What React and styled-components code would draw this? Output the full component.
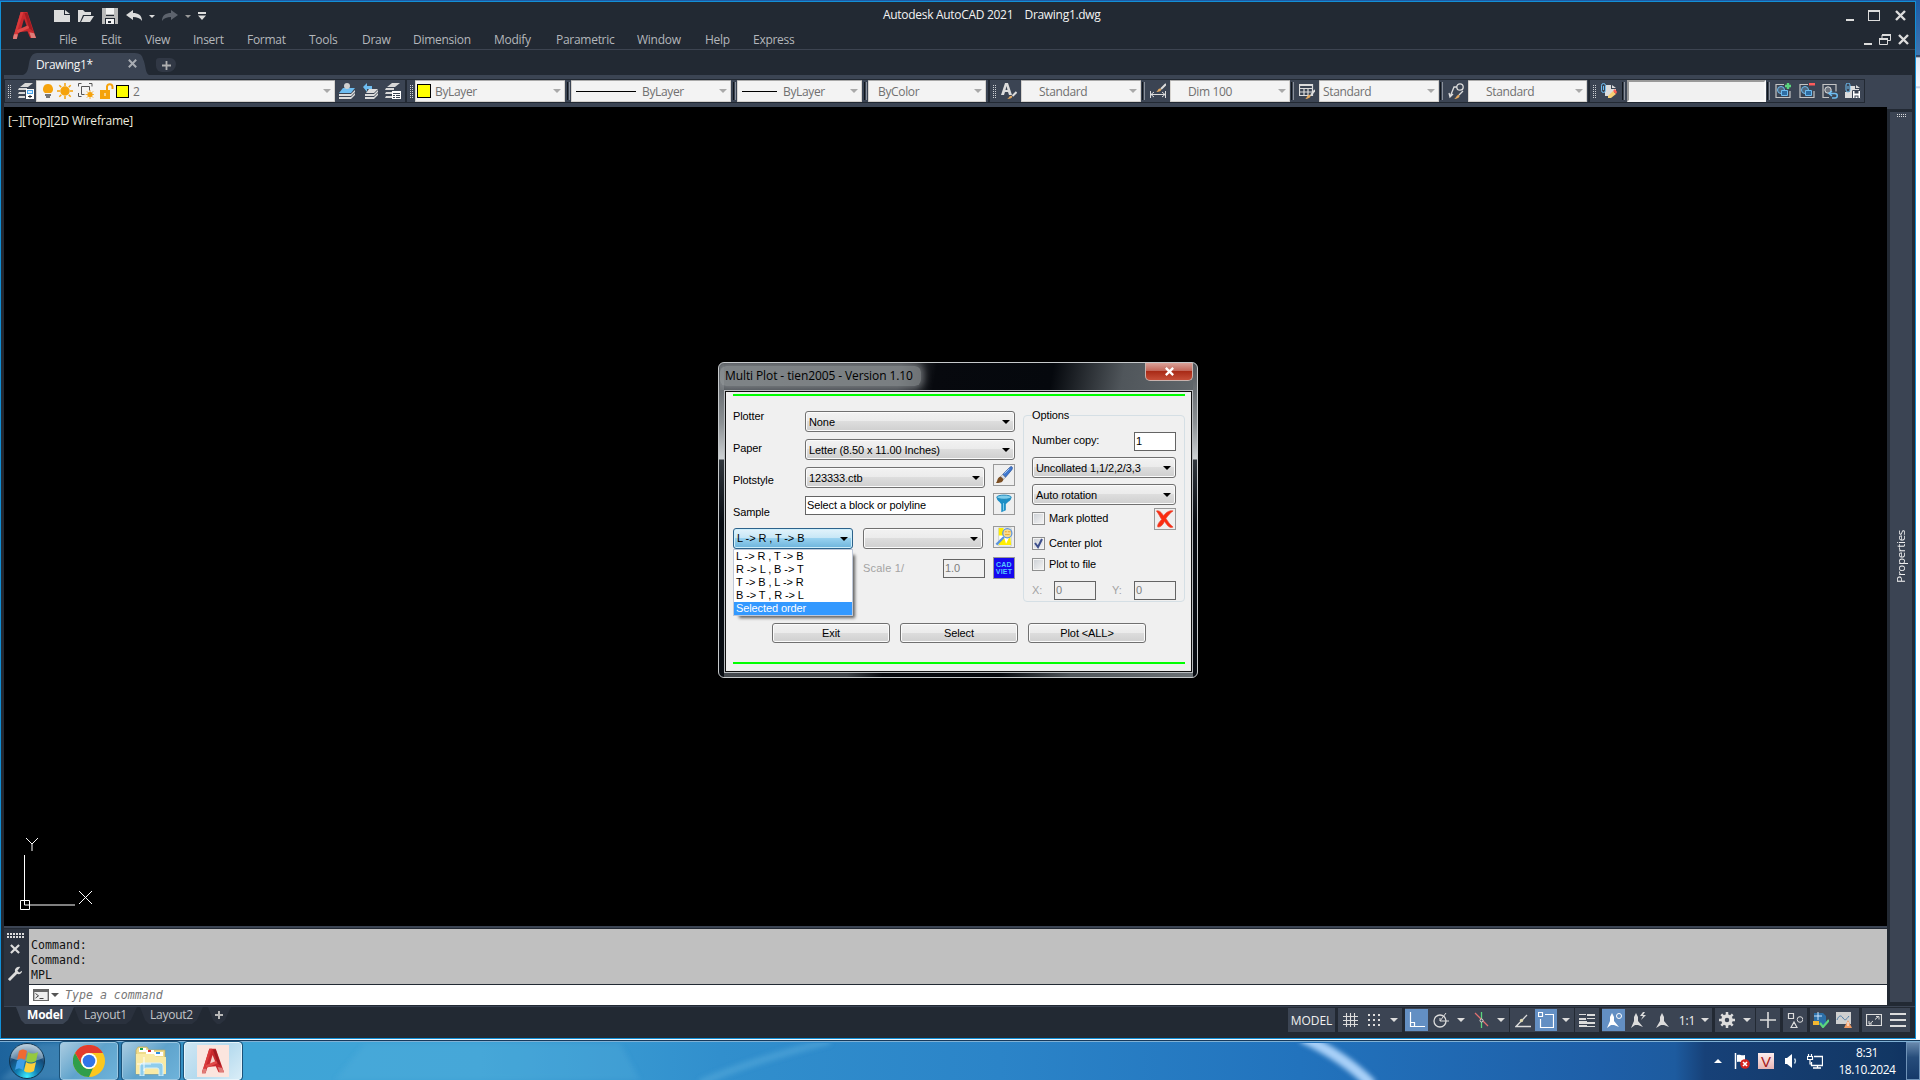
import React from 'react';
import styled, { createGlobalStyle, css } from 'styled-components';

const GlobalStyle = createGlobalStyle`
    * { box-sizing: border-box; }
    body {
        margin: 0;
        overflow: hidden;
        background: #fff;
        font-family: "Open Sans", "Noto Sans", sans-serif;
        font-size: 12px;
    }
    svg { display: block; flex: none; }
`;

const dark = '#222933';
const slate = '#3b4453';
const light = '#dcdcdc';
const blue = '#6ebcf0';
const amber = '#f5a30c';

/* ---------- icons ---------- */

const SetShape = ({ extra }) => (
    <>
        <path d="M9 1.500H1v13h14V8" fill="none" stroke="#c4c4c4" strokeWidth="1.200" />
        <circle cx="6" cy="7" r="3.500" fill="#50677d" stroke={blue} />
        <path d="M6.500 7.500h6v5h-6z" fill="#2f6da3" stroke={blue} />
        {extra}
    </>
);

const shapes = {
    newFile: <path d="M0 2h10v5h6v7H0zM11 2l5 4h-5z" fill={light} />,
    open: <path d="M0 14V2h5l2 2h6v3H5L2 14zM6 8h10l-4 6H3z" fill={light} />,
    save: <><path d="M0 0h16v16H0z" fill="#b9b9b9" /><path d="M4 0h8v6H4zM4 11h8v5H4z" fill="#f2f2f2" /><path d="M4 7h8v1H4zM3 10h10v6h-1v-5H4v5H3z" fill={dark} /><path d="M6 13h3v2H6z" fill={dark} /></>,
    undo: <path d="M0 7l7-5v3c5 0 9 2 9 8-2-3-5-4-9-4v3z" fill={light} />,
    redo: <path d="M16 7L9 2v3C4 5 0 7 0 13c2-3 5-4 9-4v3z" fill="#5d636d" />,
    more: <path d="M0 0h8v2H0zM0 3.500h8L4 8z" fill={light} />,
    layers: <><path d="M7 0h8l-5 4H2zM1 5h8v2H0zM1 9h6v2H0zM1 13h6v2H0z" fill="#d8d8d8" /><path d="M8 6h8v10H8z" fill="#fff" /><path d="M9 7h6v4H9z" fill="#4aa5ea" /><path d="M10 8h4v2h-4z" fill="#d9ecfb" /><path d="M10 13h4v1h-4zM11.500 12h1v3h-1z" fill={dark} /></>,
    layerTop: <><path d="M4 5h12l-4 5H0z" fill={blue} /><circle cx="8" cy="3" r="3" fill="#cfcfcf" /><path d="M0 11h12l4-4v2l-4 4H0zM0 14h12l4-4v2l-4 4H0z" fill={light} /></>,
    layerBack: <><path d="M1 4l4-4v3h5v3H5v3z" fill={blue} /><path d="M7 6h9l-4 4H4zM3 11h9l4-4v2l-4 4H3zM3 14h9l4-4v2l-4 4H3z" fill={light} /></>,
    layerList: <><path d="M7 0h8l-5 4H2zM1 5h8v2H0zM1 9h6v2H0zM1 13h6v2H0z" fill="#d8d8d8" /><path d="M7 8h9v8H7z" fill="#fff" /><path d="M8 10h7v1H8zM8 12h2v1H8zM11 12h4v1h-4zM8 14h2v1H8zM11 14h4v1h-4z" fill={slate} /></>,
    bulb: <><path d="M8 1a5 5 0 0 1 3 9H5a5 5 0 0 1 3-9z" fill={amber} /><path d="M5 11h6v2H5zM6 13h4v2H6z" fill="#777" /></>,
    sun: <g stroke={amber} strokeWidth="1.5"><circle cx="8" cy="8" r="4" fill={amber} /><path d="M8 0v3M8 13v3M0 8h3M13 8h3M2.300 2.300l2 2M11.700 11.700l2 2M2.300 13.700l2-2M11.700 4.300l2-2" /></g>,
    freeze: <><path d="M3.500.5h-3v3M11 .5h3v3M.5 10v3.500h3M3.500 3.500h8v4M3.500 3.500v8h3" stroke="#555" fill="none" /><circle cx="12" cy="11.500" r="2.600" fill={amber} /><path d="M12 7v9M7.500 11.500h9M8.800 8.300l6.400 6.400M15.200 8.300l-6.400 6.400" stroke={amber} strokeWidth=".8" /></>,
    lock: <><path d="M1 7h10v9H1z" fill={amber} /><path d="M8 7V3.500A2.800 2.800 0 0 1 13.500 3.500V6" stroke={amber} strokeWidth="2" fill="none" /><path d="M5.500 10h1v3h-1z" fill="#fff" /></>,
    textStyle: <><path d="M0 12L4 0h3l4 12H8L7 9H4l-1 3zM4.500 7h2l-1-4z" fill={light} fillRule="evenodd" /><path d="M15.500 9l-4 4" stroke={light} strokeWidth="2" /><path d="M6 16c2 0 2-4 5-3 1 2-2 3-5 3z" fill="#e2a860" /></>,
    dimStyle: <><path d="M.5 8v7M15.500 8v7M1 11.500h14M4 9l-3 2.500L4 14M12 9l3 2.500L12 14" stroke={light} fill="none" /><path d="M16 1l-5 5" stroke={light} strokeWidth="2" /><path d="M6 9c2 0 2-5 5-3 1 2-2 3-5 3z" fill="#e2a860" /></>,
    tableStyle: <><path d="M.5 1.500h13v11H.5zM1 5.500h12M1 9h12M5 5v8M9 5v8" stroke={light} fill="none" strokeWidth="1.200" /><path d="M0 1h14v2H0z" fill={light} /><path d="M16 7l-4 5" stroke={light} strokeWidth="2" /><path d="M6 16c2 0 2-5 5-4 2 2-2 4-5 4z" fill="#e2a860" /></>,
    leaderStyle: <><circle cx="12" cy="4" r="3.200" stroke={light} fill="none" strokeWidth="1.300" /><path d="M9 4H6L2 14M1 10l1 4 3-3M15 8l-4 4" stroke={light} fill="none" strokeWidth="1.300" /><path d="M6 16c2 0 3-5 5-4 2 2-2 4-5 4z" fill="#e2a860" /></>,
    clipEdit: <><path d="M5 2h5v4h5v3h-4v4H4V9z" fill={light} /><path d="M11 2l4 3h-4z" fill={light} /><path d="M.5 2.500a1.500 1.500 0 0 1 4 0v5a1.500 1.500 0 0 1-4 0zM2.500 3v4" stroke={blue} fill="none" /><path d="M7 13l5-5 3 3-5 4H7z" fill="#f7cf73" /><path d="M12 8l2-2 2 3-1 2z" fill="#ff5d52" /></>,
    setAdd: <SetShape extra={<path d="M10 3h6M13 0v6" stroke="#5bd67d" strokeWidth="2.400" />} />,
    setRemove: <SetShape extra={<path d="M10 0h6v2.500h-6z" fill="#ff5b5b" />} />,
    setBack: <><path d="M7 14.500H1v-13h13v7" fill="none" stroke="#c4c4c4" strokeWidth="1.200" /><circle cx="6" cy="7" r="3.200" fill="#6b727d" stroke="#ddd" /><path d="M7.500 10.500H13a2 2 0 0 1 0 4.500h-3M10 8l-3 2.500 3 2.500" stroke={blue} fill="none" strokeWidth="1.500" /></>,
    clipSave: <><path d="M5 3h5v3h4v2H7v7H0V9h5zM11 2l4 3h-4z" fill={light} /><path d="M1 2a1.500 1.500 0 0 1 4 0v5a1.500 1.500 0 0 1-4 0zM3 3v3" stroke={blue} fill={slate} /><path d="M7.500 7.500h8v8h-8z" fill="#fff" stroke={slate} /><path d="M9.500 8h4v2.500h-4zM9.500 12.500h4V15h-4z" fill={slate} /><path d="M10.500 13.500h2V15h-2z" fill="#fff" /></>,
    grid: <path d="M4.500 1v14M8.500 1v14M12.500 1v14M1 4.500h15M1 8.500h15M1 12.500h15" stroke={light} strokeWidth="1.100" />,
    dots: <path d="M2 2h2v2H2zM7 2h2v2H7zM12 2h2v2h-2zM2 7h2v2H2zM7 7h2v2H7zM12 7h2v2h-2zM2 12h2v2H2zM7 12h2v2H7zM12 12h2v2h-2z" fill={light} />,
    ortho: <path d="M1.500 0v14.500H16M1.500 10.500h4v4" stroke="#fff" fill="none" strokeWidth="1.200" />,
    polar: <><circle cx="7" cy="9" r="6" stroke={light} fill="none" strokeWidth="1.300" /><path d="M7 9l6-8M7 9h9M7 6v3" stroke={light} /></>,
    iso: <><path d="M8.500 0v16" stroke="#5bd67d" strokeWidth="1.300" /><path d="M2 1l13 13" stroke="#e07070" strokeWidth="1.300" /><circle cx="8.500" cy="8.500" r="1.500" stroke={light} fill={slate} /></>,
    track: <><path d="M16 14.500H1L12 3" stroke={light} fill="none" strokeWidth="1.300" /><circle cx="6.500" cy="8.500" r="1.700" fill="#ddd8b0" /></>,
    osnap: <path d="M.5.5h4v4h-4zM7 2.500h8.500v13h-13V7" stroke="#fff" fill="none" strokeWidth="1.200" />,
    weight: <path d="M0 2h7v1H0zM8 2h8v2H8zM0 6h7v2H0zM8 6h8v1H8zM0 9h8v3H0zM8 10h8v2H8zM0 13h8v2H0zM8 14h8v1H8z" fill={light} />,
    annoOn: <><path d="M6 1l2 4v4l5 6-5-2H5l-4 3 3-7V5z" fill="#fff" /><circle cx="13" cy="4" r="2.500" fill="none" stroke="#fff" /></>,
    annoAuto: <><path d="M6 1l2 4v4l5 6-5-2H5l-4 3 3-7V5z" fill={light} /><path d="M13 0l-3 4h3l-2 4 5-5h-3l2-3z" fill={light} /></>,
    anno: <path d="M8 1l2 4v4l5 6-5-2H7l-5 3 4-7V5z" fill={light} />,
    gear: <><circle cx="8" cy="8" r="4" stroke={light} strokeWidth="3.500" fill="none" /><path d="M8 0v4M8 12v4M0 8h4M12 8h4M2.300 2.300l3 3M10.700 10.700l3 3M2.300 13.700l3-3M10.700 5.300l3-3" stroke={light} strokeWidth="2.500" /></>,
    plus: <path d="M7.200 0h1.600v7.200H16v1.600H8.800V16H7.200V8.800H0V7.200h7.200z" fill={light} />,
    isolate: <><path d="M1.500 1.500h5v5h-5zM4 15.500h6L7 10z" stroke={light} fill="none" strokeWidth="1.200" /><circle cx="13" cy="7.500" r="2.800" stroke={light} fill="none" /></>,
    hardware: <><path d="M1 1h9l3 3v9H1z" fill="#2b6fa8" /><path d="M1 4h8M5 0v8" stroke="#cfe7ff" /><path d="M0 9h6v4H0z" fill="#f3b630" /><path d="M7 11l3 4 6-7" stroke="#5bd67d" strokeWidth="2.200" fill="none" /></>,
    graphics: <><path d="M0 0h15v12H0z" fill="#cfcfcf" /><path d="M1 8c2-5 4-5 6-2s3 2 6-2" stroke="#4d7ea8" fill="none" /><path d="M8 16l4-8 4 8z" fill="#f19a63" /><path d="M12 10v4" stroke="#fff" /></>,
    clean: <><path d="M.5 2.500h15v11H.5z" stroke={light} fill="none" strokeWidth="1.200" /><path d="M9 7.500l3.500-3M10 4.500h3v3M7 9l-3.500 3M3 9v3h3" stroke={light} fill="none" /></>,
    menu: <path d="M0 1h16v2H0zM0 7h16v2H0zM0 13h16v2H0z" fill={light} />,
    wrench: <><path d="M1 15l8-8" stroke={light} strokeWidth="3" /><path d="M13 1c-4-1-7 3-5 6 2 3 7 2 7-2l-3 2-2-2z" fill={light} /></>,
    prompt: <><path d="M.7.7h14.600v11H.7z" fill="#eee" stroke="#666" strokeWidth="1.400" /><path d="M0 0h16v3H0z" fill="#666" /><path d="M2.500 4.500l3 2.300-3 2.300M6.500 9.500h4" stroke="#444" fill="none" /></>,
    brush: <><path d="M19 2c1 1 0 3-1 4l-6 7-3-3 7-7c1-1 2-2 3-1z" fill="#3f78cf" stroke="#27488a" strokeWidth=".6" /><path d="M16 4l-5 5" stroke="#a9cdf7" /><path d="M9 10l3 3-2 2-3-3z" fill="#d8dde5" stroke="#777" strokeWidth=".5" /><path d="M7 12l3 3c-1 4-5 4-8 4 2-2 1-6 5-7z" fill="#7a4d22" /></>,
    funnel: <><path d="M3 4c0 3 3 4 5 7v9l5-2v-7c3-3 6-4 6-7z" fill="#1d8fc6" /><ellipse cx="11" cy="3.500" rx="8" ry="2.300" fill="#7fcdea" stroke="#1783b8" /><path d="M10.500 10v8" stroke="#8bd8f5" /></>,
    preview: <><path d="M5 1h13v19H5z" fill="#fff" stroke="#9aa" strokeWidth=".5" /><path d="M5 1h5v8H5zM5 15l6-3 2 7H5zM17 9l1 10h-6z" fill="#ffee00" /><circle cx="14" cy="6.500" r="4.800" fill="#f8dc91" stroke="#5a93dd" strokeWidth="1.300" /><path d="M11.500 5h2M14.500 5h3M11.500 8h5" stroke="#eba528" /><path d="M10.500 10.500l-8 8" stroke="#5a93dd" strokeWidth="2.400" /></>,
    redX: <path d="M1.500 2c3-1 5.500 2 7.500 5 2-3 6-6 10-5-3 2-5.500 5-7.500 8 2 3 4.500 7 7.500 9-3 1-5 0-9-6-2 4-4 6-7 6-1-2 1-5 4-8C5 8 4 5 1.500 2z" fill="#fb2c10" stroke="#e54a3a" strokeWidth=".7" />,
    flag: <><path d="M1.500 0v16" stroke="#fff" strokeWidth="1.500" /><path d="M3 2c3-1 4 1 8 0v7c-4 1-5-1-8 0z" fill="#fff" /><circle cx="11" cy="11" r="4.800" fill="#d5231c" /><path d="M9 9l4 4M13 9l-4 4" stroke="#fff" strokeWidth="1.600" /></>,
    speaker: <><path d="M1 5h2l5-4v14l-5-4H1z" fill="#fff" /><path d="M10.500 5.500c1.200 1.500 1.200 3.500 0 5" stroke="#c9dbe9" fill="none" strokeWidth="1.300" /></>,
    network: <><path d="M7 3.500h8.500v9h-11V9M6 15h8M10.500 12v3" stroke="#fff" strokeWidth="1.300" fill="none" /><path d="M1.500 1v2M4.500 1v2M.5 3.500h5v3h-5zM3 6.500V11h1.500" stroke="#fff" fill="none" strokeWidth="1.200" /></>,
};

const Icon = ({ name, size = 16, h, box }) => (
    <svg width={size} height={h || size} viewBox={box || '0 0 16 16'}>{shapes[name]}</svg>
);

const Logo = ({ w, h }) => (
    <svg width={w} height={h} viewBox="0 0 26 30" preserveAspectRatio="none">
        <path d="M9 1h7l9 27h-6l-3-7-9 1-2 7H1z" fill="#c8282d" />
        <path d="M12.500 8l3 8-6 3z" fill={w < 25 ? '#f4d3cd' : dark} />
        <path d="M9 1h3L6 19l-1 9H1z" fill="#d93a3b" />
        <path d="M5 20l11-5 3 2-13 6z" fill="#e04a48" />
        <path d="M2 24h4l-1 5H1zM18 22l5 1 2 5h-5z" fill="#de7d79" />
        <path d="M13 2h3l6 19-4-3z" fill="#a01c22" />
    </svg>
);

const Caret = styled.span`
    flex: none;
    width: 0;
    height: 0;
    border: ${p => p.$s || 4}px solid transparent;
    border-top-color: ${p => p.$c || light};
    border-bottom: 0;
`;

const Cross = ({ s = 11, w = 2.4, c = light }) => (
    <svg width={s} height={s} viewBox="0 0 11 11"><path d="M1 1l9 9M10 1l-9 9" stroke={c} strokeWidth={w} /></svg>
);

/* ---------- window chrome ---------- */

const Screen = styled.div`
    width: 1920px;
    height: 1080px;
    display: flex;
    flex-direction: column;
    background: linear-gradient(#1c5ba6 0, #3f76b0 55px, #111a30 56px, #dfe9f6 58px, #f5f8fd 86px, #b9c3dc 87px, #fff 89px);
`;

const AppWindow = styled.div`
    width: 1916px;
    height: 1038px;
    margin-top: 1px;
    border: 1px solid #128fd6;
    background: ${dark};
    display: flex;
    flex-direction: column;
`;

const Header = styled.div`
    height: 48px;
    flex: none;
    display: flex;
    border-bottom: 1px solid #3d4451;
    padding-left: 11px;
`;

const LogoBox = styled.div`
    width: 41px;
    padding-top: 9px;
`;

const HeaderRows = styled.div`
    flex: 1;
    min-width: 0;
`;

const TitleRow = styled.div`
    height: 26px;
    display: flex;
    align-items: center;
    color: #f2f2f2;
`;

const QuickAccess = styled.div`
    width: 830px;
    flex: none;
    display: flex;
    align-items: center;
    gap: 8px;
    padding: 2px 0 0 1px;

    ${Caret} { margin: 0 -1px; }
`;

const TitleText = styled.div`
    width: 963px;
    flex: none;
    white-space: pre;
    letter-spacing: -0.3px;
    padding-bottom: 1px;
`;

const Controls = styled.div`
    display: flex;
    align-items: center;
    gap: ${p => p.$gap}px;
    padding-top: ${p => p.$pt}px;
`;

const Dash = styled.span`
    width: 8px;
    height: 2px;
    background: ${light};
    margin-top: 9px;
`;

const MaxBox = styled.span`
    width: 12px;
    height: 11px;
    margin-right: 1px;
    border: 1px solid ${light};
    border-top-width: 2px;
`;

const MenuRow = styled.div`
    height: 21px;
    display: flex;
    align-items: center;
    padding-left: 6px;
    color: #b4b7bb;
`;

const MenuItem = styled.span`
    flex: none;
    width: ${p => p.$w}px;
    letter-spacing: -0.28px;
    line-height: 20px;
    padding-top: 2px;
`;

const TabRow = styled.div`
    height: 25px;
    flex: none;
    display: flex;
    padding: 3px 0 0 3px;
`;

const FileTab = styled.div`
    display: flex;
    align-items: center;
    height: 22px;
    width: 126px;
    margin-left: 19px;
    padding: 0 0 0 13px;
    color: #f4f4f4;
    background: ${slate};
    clip-path: path("M0 22C6 20 5 12 7 6Q9 0 14 0H112Q119 0 120 6C123 12 122 20 126 22Z");
    letter-spacing: -0.35px;

    svg { margin: 0 0 1px 35px; }
`;

const NewTab = styled.div`
    width: 20px;
    height: 14px;
    margin: 5px 0 0 7px;
    background: #313845;
    border-radius: 3px 6px 8px 6px;
    display: flex;
    align-items: center;
    justify-content: center;
`;

const ToolbarBand = styled.div`
    height: 34px;
    flex: none;
    margin: 0 3px 0 3px;
    padding-top: 4px;
    background: ${slate};
    display: flex;
`;

const Toolbar = styled.div`
    width: ${p => p.$w}px;
    height: 24px;
    border: 1px solid ${dark};
    display: flex;
    align-items: center;
    flex: none;
`;

const Grip = styled.span`
    width: 3px;
    height: 13px;
    margin: 0 ${p => p.$r ?? 3}px 0 3px;
    flex: none;
    background:
        repeating-linear-gradient(transparent 0 1px, ${slate} 1px 2px),
        repeating-linear-gradient(90deg, #cdd0d4 0 1px, ${slate} 1px 2px);
`;

const Divider = styled.span`
    width: 3px;
    height: 18px;
    flex: none;
    margin: 0 ${p => p.$m ?? 1}px;
    border-left: 1px solid #11161c;
    border-right: 1px solid #8a909a;
`;

const Combo = styled.div`
    width: ${p => p.$w}px;
    height: 22px;
    flex: none;
    display: flex;
    align-items: center;
    padding: 0 3px 0 ${p => p.$pl || 3}px;
    background: #f3f3f3;
    border: 1px solid #d5d2ce;
    border-top-color: #aaa;
    border-radius: 1px;
    color: #707070;
    letter-spacing: -0.35px;

    ${Caret} { margin-left: auto; }
`;

const Swatch = styled.span`
    width: ${p => p.$s}px;
    height: ${p => p.$s}px;
    background: #ff0;
    border: 1px solid #000;
    margin-right: 4px;
`;

const Stroke = styled.span`
    width: ${p => p.$w}px;
    height: 1px;
    background: #000;
    margin-right: 6px;
`;

const ToolSlot = styled.span`
    width: ${p => p.$w}px;
    flex: none;
    display: flex;
    justify-content: center;
`;

const Field = styled.div`
    width: 140px;
    height: 22px;
    background: #f1f1f1;
    border: 2px solid #f8f8f8;
    border-top-color: #999;
    border-left-color: #999;
`;

/* ---------- drawing area ---------- */

const Body = styled.div`
    flex: 1;
    min-height: 0;
    display: flex;
    padding-left: 3px;
    margin-top: -2px;
`;

const Main = styled.div`
    width: 1883px;
    display: flex;
    flex-direction: column;
`;

const Canvas = styled.div`
    height: 819px;
    flex: none;
    background: #000;
    position: relative;
    color: #eceade;
    padding: 4px 4px;
    letter-spacing: -0.2px;
    line-height: 20px;
`;

const Ucs = styled.svg`
    position: absolute;
    left: 12px;
    top: 728px;
`;

const Palette = styled.div`
    width: 22px;
    margin: 5px 0 4px 3px;
    background: ${slate};
    display: flex;
    flex-direction: column;
    align-items: center;
    padding-top: 2px;
`;

const Dots = styled.span`
    width: ${p => p.$w}px;
    height: ${p => p.$h || 4}px;
    flex: none;
    background: repeating-linear-gradient(90deg, ${light} 0 ${p => p.$d || 1}px, transparent ${p => p.$d || 1}px ${p => (p.$d || 1) + 1}px);
    mask: linear-gradient(#000 40%, transparent 40% 60%, #000 60%);
`;

const PaletteName = styled.span`
    writing-mode: vertical-rl;
    transform: rotate(180deg);
    color: #f0f0f0;
    margin-top: 413px;
    font-size: 11.500px;
    letter-spacing: -0.3px;
    line-height: 20px;
`;

const CommandPane = styled.div`
    height: 80px;
    flex: none;
    display: flex;
    border-top: 2px solid ${slate};
    padding-top: 1px;
`;

const CommandSide = styled.div`
    width: 25px;
    background: #2c333f;
    display: flex;
    flex-direction: column;
    align-items: center;
    padding: 4px 3px 0 0;
    gap: 6px;

    svg + svg { margin-top: 6px; }
`;

const CommandText = styled.div`
    width: 1858px;
    font-family: "DejaVu Sans Mono", "Liberation Mono", monospace;
    font-size: 11.600px;
    letter-spacing: 0;
`;

const History = styled.div`
    height: 55px;
    background: #c0c0c0;
    padding: 9px 2px 0;
    line-height: 15px;
    color: #111;
`;

const Prompt = styled.div`
    height: 20px;
    margin-top: 1px;
    background: #fff;
    display: flex;
    align-items: center;
    padding-left: 4px;
    gap: 2px;
    color: #777;
    font-style: italic;

    em { margin-left: 4px; }
`;

/* ---------- status bar ---------- */

const StatusBar = styled.div`
    height: 32px;
    flex: none;
    margin-left: 3px;
    border-top: 1px solid ${slate};
    display: flex;
    justify-content: space-between;
`;

const LayoutTabs = styled.div`
    display: flex;
    padding-left: 12px;
    height: 17px;
`;

const LayoutTab = styled.div`
    width: ${p => p.$w}px;
    height: 17px;
    line-height: 16px;
    text-align: center;
    letter-spacing: -0.25px;
    color: ${p => (p.$active ? '#fff' : '#c3c6ca')};
    font-weight: ${p => (p.$active ? 700 : 400)};
    background: ${p => (p.$active ? slate : '#2a313d')};
    clip-path: polygon(0 0, 100% 0, calc(100% - 6px) 13px, calc(100% - 11px) 100%, 9px 100%, 5px 13px);
    margin-right: ${p => p.$mr || 0}px;
`;

const StatusTools = styled.div`
    display: flex;
    padding: 1px 5px 0 0;
`;

const StatusGroup = styled.div`
    width: ${p => p.$w}px;
    height: 24px;
    margin-right: ${p => p.$mr ?? 3}px;
    background: ${slate};
    display: flex;
    align-items: center;
    justify-content: ${p => (p.$center ? 'center' : 'flex-start')};
    color: #f0f0f0;
    letter-spacing: -0.1px;
`;

const StatusSlot = styled.span`
    width: ${p => p.$w || 24}px;
    height: ${p => (p.$on ? 22 : 24)}px;
    display: flex;
    align-items: center;
    justify-content: center;
    background: ${p => (p.$on ? '#638fc3' : 'transparent')};
`;

/* ---------- plot dialog ---------- */

const Dialog = styled.div`
    position: absolute;
    left: 714px;
    top: 255px;
    width: 480px;
    height: 316px;
    padding: 0 4px 5px 5px;
    border: 1px solid #c6c9cb;
    border-radius: 6px;
    background:
        linear-gradient(#50555a 0, #8c9194 60px, #ced2d4 96px, #30363c 97px, #080c12 160px) 0 0 / 5px 100% no-repeat,
        linear-gradient(#50555a 0, #8c9194 60px, #ced2d4 96px, #30363c 97px, #080c12 160px) 100% 0 / 4px 100% no-repeat,
        linear-gradient(100deg, #4a4f54 0, #3d4146 180px, #07090e 215px, #05080d 330px, #50565b 400px, #6c7276 100%);
    color: #000;
    font-family: "Liberation Sans", Arial, sans-serif;
    font-size: 11px;
    letter-spacing: -0.1px;
`;

const DialogTitle = styled.div`
    height: 27px;
    display: flex;
    justify-content: space-between;
    font-family: "Open Sans", "Noto Sans", sans-serif;
    font-size: 12px;
    line-height: 26px;
    letter-spacing: -0.1px;
`;

const TitleGlow = styled.span`
    height: 20px;
    margin: 3px 0 0 -4px;
    padding: 0 8px 0 5px;
    line-height: 20px;
    background: rgba(160, 164, 167, 0.62);
    box-shadow: 0 0 7px 3px rgba(160, 164, 167, 0.55);
    border-radius: 6px;
    clip-path: inset(-3px -16px -4px 0);
`;

const CloseButton = styled.div`
    width: 48px;
    height: 18px;
    border: 1px solid #c9b2ad;
    border-top: 0;
    border-radius: 0 0 5px 5px;
    background: linear-gradient(#d9a198 0, #c2675a 45%, #a92b17 50%, #c64e38 100%);
    display: flex;
    align-items: center;
    justify-content: center;
`;

const Client = styled.div`
    height: 283px;
    border: 1px solid #b9bcbf;
    outline: 1px solid #111;
    outline-offset: -2px;
    background: #f0f0f0;
    padding: 3px 7px 0 8px;
    line-height: 13px;
`;

const GreenLine = styled.div`
    height: 2px;
    width: 452px;
    background: #0f0;
`;

const Columns = styled.div`
    display: flex;
    height: 227px;
    padding-bottom: 1px;
`;

const LeftForm = styled.div`
    width: 290px;
    flex: none;
    padding-top: 15px;
`;

const FormRow = styled.div`
    display: flex;
    align-items: center;
    height: ${p => p.$h}px;
`;

const FormLabel = styled.span`
    width: 72px;
    padding-bottom: ${p => p.$up || 0}px;
    padding-top: ${p => p.$down || 0}px;
`;

const raised = css`
    border: 1px solid #707070;
    border-radius: 3px;
    box-shadow: inset 0 0 0 1px #fbfbfb;
    background: linear-gradient(#f2f2f2 0, #ebebeb 49%, #dddddd 50%, #cfcfcf 100%);
`;

const Select = styled.div`
    ${raised}
    width: ${p => p.$w}px;
    height: 21px;
    flex: none;
    padding: 1px 4px 0 3px;
    display: flex;
    align-items: center;
    justify-content: space-between;
    white-space: pre;

    ${Caret} { margin-left: auto; }

    ${p => p.$open && css`
        border-color: #2c628b;
        box-shadow: inset 0 0 0 1px #cdeefb;
        background: linear-gradient(#e2f3fb 0, #c6e6f6 49%, #98d1ef 50%, #6cb4dc 100%);
    `}
`;

const TextInput = styled.div`
    width: ${p => p.$w}px;
    height: 19px;
    flex: none;
    padding: 2px 1px;
    background: ${p => (p.$off ? '#f0f0f0' : '#fff')};
    color: ${p => (p.$off ? '#7d7d7d' : '#000')};
    border: 1px solid #646464;
`;

const IconButton = styled.div`
    width: 22px;
    height: 22px;
    flex: none;
    margin: 0 0 ${p => p.$up || 0}px ${p => p.$ml || 0}px;
    border: 1px solid #999;
    background: ${p => p.$bg || '#efefef'};
    display: flex;
    align-items: center;
    justify-content: center;
`;

const CadViet = styled.span`
    color: #55c8ff;
    font-size: 7px;
    font-weight: 700;
    line-height: 7px;
    text-align: center;
    letter-spacing: 0.2px;
`;

const OrderPicker = styled.div`
    position: relative;
    margin-right: 10px;
`;

const OrderList = styled.div`
    position: absolute;
    left: 0;
    top: 21px;
    width: 120px;
    height: 67px;
    background: #fff;
    border: 1px solid #bfc8d8;
    box-shadow: 4px 4px 3px -2px rgba(0, 0, 0, 0.6);
    white-space: pre;
`;

const OrderItem = styled.div`
    height: 13px;
    line-height: 13px;
    padding-left: 2px;
    ${p => p.$picked && css`
        background: #39f;
        color: #fff;
    `}
`;

const ScaleLabel = styled.span`
    margin-left: 130px;
    width: 80px;
    color: #a3a3a3;
    letter-spacing: 0.2px;
`;

const Options = styled.div`
    width: 162px;
    height: 187px;
    flex: none;
    margin-top: 19px;
    border: 1px solid #d5dfe5;
    border-radius: 4px;
    padding: 0 8px;
`;

const Legend = styled.div`
    width: 38px;
    height: 13px;
    margin-top: -7px;
    background: #f0f0f0;
`;

const OptionRow = styled.div`
    display: flex;
    align-items: center;
    justify-content: space-between;
    height: 21px;
    margin-top: ${p => p.$mt}px;
`;

const CopyLabel = styled.span`
    padding-bottom: 3px;
`;

const Check = styled.div`
    display: flex;
    align-items: center;
    gap: 4px;

    i {
        width: 13px;
        height: 13px;
        border: 1px solid #8e8f8f;
        background: linear-gradient(135deg, #cbcfd5, #f6f6f6);
        box-shadow: inset 0 0 0 1px #f4f4f4;
    }
`;

const Faint = styled.span`
    width: 22px;
    margin-left: ${p => p.$ml || 0}px;
    color: #a3a3a3;
`;

const Buttons = styled.div`
    display: flex;
    gap: 10px;
    padding: 0 0 0 39px;
    height: 39px;
`;

const PushButton = styled.div`
    ${raised}
    width: 118px;
    height: 20px;
    line-height: 18px;
    text-align: center;
`;

/* ---------- windows taskbar ---------- */

const Taskbar = styled.div`
    height: 41px;
    position: relative;
    border-top: 1px solid #f2f8fd;
    display: flex;
    box-shadow: inset 0 1px 0 #173a5c, inset 0 2px 0 #7fb0d4;
    background: linear-gradient(90deg, #1d639c 0, #2a7bb0 120px, #3fa5d7 245px, #3fa3d6 480px, #318fcd 720px, #2b84c8 1000px, #2273bd 1300px, #1e5fa8 1600px, #1d5b9f 1675px, #174178 1705px, #123764 1890px, #0f3160 100%);
`;

const Streaks = styled.svg`
    position: absolute;
    left: 0;
    top: 3px;
`;

const StartOrb = styled.div`
    position: relative;
    width: 60px;
    padding: 2px 0 0 8px;
`;

const TaskButton = styled.div`
    position: relative;
    width: 58px;
    height: 38px;
    margin: 2px 4px 0 0;
    border: 1px solid ${p => (p.$active ? '#e6f4fb' : '#9cc8e2')};
    outline: 1px solid #1b5279;
    border-radius: 3px;
    background: ${p => (p.$active
        ? 'linear-gradient(135deg, #cfe6f3, #b4daee 50%, #d9edf7)'
        : 'linear-gradient(135deg, #a9cbe0, #5fa3cc 50%, #6eb3da)')};
    display: flex;
    align-items: center;
    justify-content: center;
`;

const LogoTile = styled.div`
    width: 32px;
    height: 32px;
    background: #fbe5de;
    display: flex;
    align-items: center;
    justify-content: center;
`;

const Tray = styled.div`
    position: relative;
    display: flex;
    align-items: center;
    margin-left: auto;
    padding-top: 1px;
    color: #fff;
`;

const TraySlot = styled.span`
    width: ${p => p.$w}px;
    display: flex;
`;

const UpCaret = styled.span`
    border: 4px solid transparent;
    border-bottom-color: #fff;
    border-top: 0;
`;

const KeyTile = styled.span`
    width: 16px;
    height: 16px;
    background: linear-gradient(#fdeeee, #e7b5b5);
    color: #a51919;
    font: 400 15px/17px "Liberation Sans", Arial, sans-serif;
    text-align: center;
`;

const Clock = styled.div`
    width: 78px;
    text-align: center;
    line-height: 17px;
    letter-spacing: -0.4px;
`;

const ShowDesktop = styled.div`
    position: relative;
    width: 14px;
    margin-top: 2px;
    border: 1px solid #6f93b8;
    background: linear-gradient(#6687ab, #274d7b 40%, #163a69);
`;

const menus = [
    ['File', 42], ['Edit', 44], ['View', 48], ['Insert', 54], ['Format', 62], ['Tools', 53], ['Draw', 51],
    ['Dimension', 81], ['Modify', 62], ['Parametric', 81], ['Window', 68], ['Help', 48], ['Express', 1111],
];

const orders = ['L -> R , T -> B', 'R -> L , B -> T', 'T -> B , L -> R', 'B -> T , R -> L', 'Selected order'];

const PlotDialog = () => (
    <Dialog>
        <DialogTitle>
            <TitleGlow>Multi Plot - tien2005 - Version 1.10</TitleGlow>
            <CloseButton><Cross s={9} w={2.8} c="#fff" /></CloseButton>
        </DialogTitle>
        <Client>
            <GreenLine />
            <Columns>
                <LeftForm>
                    <FormRow $h={21}>
                        <FormLabel $up={11}>Plotter</FormLabel>
                        <Select $w={210}>None<Caret $c="#000" /></Select>
                    </FormRow>
                    <FormRow $h={35}>
                        <FormLabel $up={3}>Paper</FormLabel>
                        <Select $w={210}>Letter (8.50 x 11.00 Inches)<Caret $c="#000" /></Select>
                    </FormRow>
                    <FormRow $h={21}>
                        <FormLabel $down={5}>Plotstyle</FormLabel>
                        <Select $w={180}>123333.ctb<Caret $c="#000" /></Select>
                        <IconButton $ml={8} $up={5}><Icon name="brush" size={20} box="0 0 21 21" /></IconButton>
                    </FormRow>
                    <FormRow $h={35}>
                        <FormLabel $down={14}>Sample</FormLabel>
                        <TextInput $w={180}>Select a block or polyline</TextInput>
                        <IconButton $ml={8} $up={4}><Icon name="funnel" size={20} box="0 0 22 22" /></IconButton>
                    </FormRow>
                    <FormRow $h={30}>
                        <OrderPicker>
                            <Select $w={120} $open>{orders[0]}<Caret $c="#000" /></Select>
                            <OrderList>
                                {orders.map((order, i) => (
                                    <OrderItem key={order} $picked={i === 4}>{order}</OrderItem>
                                ))}
                            </OrderList>
                        </OrderPicker>
                        <Select $w={120}><Caret $c="#000" /></Select>
                        <IconButton $ml={10} $up={2}><Icon name="preview" size={20} box="0 0 21 21" /></IconButton>
                    </FormRow>
                    <FormRow $h={31}>
                        <ScaleLabel>Scale 1/</ScaleLabel>
                        <TextInput $w={42} $off>1.0</TextInput>
                        <IconButton $ml={8} $up={1} $bg="#1607ee"><CadViet>CAD<br />VIET</CadViet></IconButton>
                    </FormRow>
                </LeftForm>
                <Options>
                    <Legend>Options</Legend>
                    <OptionRow $mt={9}><CopyLabel>Number copy:</CopyLabel><TextInput $w={42}>1</TextInput></OptionRow>
                    <OptionRow $mt={5}><Select $w={144}>Uncollated 1,1/2,2/3,3<Caret $c="#000" /></Select></OptionRow>
                    <OptionRow $mt={6}><Select $w={144}>Auto rotation<Caret $c="#000" /></Select></OptionRow>
                    <OptionRow $mt={3}>
                        <Check><i />Mark plotted</Check>
                        <IconButton><Icon name="redX" size={20} box="0 0 21 21" /></IconButton>
                    </OptionRow>
                    <OptionRow $mt={4}>
                        <Check>
                            <i><svg width="11" height="11" viewBox="0 0 11 11"><path d="M2 5l3 4 4-8" stroke="#3d4f8c" strokeWidth="2" fill="none" /></svg></i>
                            Center plot
                        </Check>
                    </OptionRow>
                    <OptionRow $mt={0}><Check><i />Plot to file</Check></OptionRow>
                    <OptionRow $mt={5}>
                        <Faint>X:</Faint><TextInput $w={42} $off>0</TextInput>
                        <Faint $ml={16}>Y:</Faint><TextInput $w={42} $off>0</TextInput>
                    </OptionRow>
                </Options>
            </Columns>
            <Buttons>
                <PushButton>Exit</PushButton>
                <PushButton>Select</PushButton>
                <PushButton>Plot &lt;ALL&gt;</PushButton>
            </Buttons>
            <GreenLine />
        </Client>
    </Dialog>
);

const Toolbars = () => (
    <ToolbarBand>
        <Toolbar $w={402}>
            <Grip $r={4} />
            <ToolSlot $w={21}><Icon name="layers" /></ToolSlot>
            <Combo $w={299}>
                <ToolSlot $w={16}><Icon name="bulb" /></ToolSlot>
                <ToolSlot $w={18}><Icon name="sun" /></ToolSlot>
                <ToolSlot $w={23}><Icon name="freeze" /></ToolSlot>
                <ToolSlot $w={19}><Icon name="lock" /></ToolSlot>
                <Swatch $s={13} />2
                <Caret $c="#a9a9a9" />
            </Combo>
            <ToolSlot $w={23}><Icon name="layerTop" /></ToolSlot>
            <ToolSlot $w={24}><Icon name="layerBack" /></ToolSlot>
            <ToolSlot $w={22}><Icon name="layerList" /></ToolSlot>
        </Toolbar>
        <Toolbar $w={583}>
            <Grip $r={2} />
            <Combo $w={150} $pl={1}><Swatch $s={14} />ByLayer<Caret $c="#a9a9a9" /></Combo>
            <Divider $m={1.5} />
            <Combo $w={160} $pl={4}><Stroke $w={60} />ByLayer<Caret $c="#a9a9a9" /></Combo>
            <Divider $m={1.5} />
            <Combo $w={125} $pl={4}><Stroke $w={35} />ByLayer<Caret $c="#a9a9a9" /></Combo>
            <Divider $m={1.5} />
            <Combo $w={118} $pl={9}>ByColor<Caret $c="#a9a9a9" /></Combo>
        </Toolbar>
        <Toolbar $w={600}>
            <Grip $r={1} />
            <ToolSlot $w={24}><Icon name="textStyle" /></ToolSlot>
            <Combo $w={120} $pl={17}>Standard<Caret $c="#a9a9a9" /></Combo>
            <Divider />
            <ToolSlot $w={24}><Icon name="dimStyle" /></ToolSlot>
            <Combo $w={120} $pl={17}>Dim 100<Caret $c="#a9a9a9" /></Combo>
            <Divider />
            <ToolSlot $w={24}><Icon name="tableStyle" /></ToolSlot>
            <Combo $w={120} $pl={3}>Standard<Caret $c="#a9a9a9" /></Combo>
            <Divider />
            <ToolSlot $w={24}><Icon name="leaderStyle" /></ToolSlot>
            <Combo $w={119} $pl={17}>Standard<Caret $c="#a9a9a9" /></Combo>
        </Toolbar>
        <Toolbar $w={276}>
            <Grip $r={2} />
            <ToolSlot $w={22}><Icon name="clipEdit" /></ToolSlot>
            <Divider $m={2} />
            <Field />
            <Divider $m={1} />
            <ToolSlot $w={24}><Icon name="setAdd" /></ToolSlot>
            <ToolSlot $w={23}><Icon name="setRemove" /></ToolSlot>
            <ToolSlot $w={23}><Icon name="setBack" /></ToolSlot>
            <ToolSlot $w={23}><Icon name="clipSave" /></ToolSlot>
        </Toolbar>
    </ToolbarBand>
);

const Status = () => (
    <StatusBar>
        <LayoutTabs>
            <LayoutTab $w={58} $active>Model</LayoutTab>
            <LayoutTab $w={63} $mr={3}>Layout1</LayoutTab>
            <LayoutTab $w={63} $mr={5}>Layout2</LayoutTab>
            <LayoutTab $w={23}>
                <svg width="23" height="17" viewBox="0 0 23 17"><path d="M11 4v8M7 8h8" stroke="#b8b8b8" strokeWidth="2" /></svg>
            </LayoutTab>
        </LayoutTabs>
        <StatusTools>
            <StatusGroup $w={47} $center>MODEL</StatusGroup>
            <StatusGroup $w={64}>
                <StatusSlot><Icon name="grid" /></StatusSlot><StatusSlot><Icon name="dots" /></StatusSlot><StatusSlot $w={16}><Caret /></StatusSlot>
            </StatusGroup>
            <StatusGroup $w={104} $mr={1}>
                <StatusSlot $w={23} $on><Icon name="ortho" /></StatusSlot><StatusSlot $w={25}><Icon name="polar" /></StatusSlot><StatusSlot $w={15}><Caret /></StatusSlot>
                <StatusSlot $w={25}><Icon name="iso" /></StatusSlot><StatusSlot $w={16}><Caret /></StatusSlot>
            </StatusGroup>
            <StatusGroup $w={64} $mr={1}>
                <StatusSlot $w={25}><Icon name="track" /></StatusSlot><StatusSlot $w={22} $on><Icon name="osnap" /></StatusSlot><StatusSlot $w={17}><Caret /></StatusSlot>
            </StatusGroup>
            <StatusGroup $w={24}><StatusSlot><Icon name="weight" /></StatusSlot></StatusGroup>
            <StatusGroup $w={110}>
                <StatusSlot $w={23} $on><Icon name="annoOn" /></StatusSlot><StatusSlot $w={25}><Icon name="annoAuto" /></StatusSlot><StatusSlot><Icon name="anno" /></StatusSlot>
                <StatusSlot $w={26}>1:1</StatusSlot><StatusSlot $w={10}><Caret /></StatusSlot>
            </StatusGroup>
            <StatusGroup $w={40} $mr={1}><StatusSlot $w={23}><Icon name="gear" /></StatusSlot><StatusSlot $w={17}><Caret /></StatusSlot></StatusGroup>
            <StatusGroup $w={24}><StatusSlot><Icon name="plus" /></StatusSlot></StatusGroup>
            <StatusGroup $w={24}><StatusSlot><Icon name="isolate" /></StatusSlot></StatusGroup>
            <StatusGroup $w={49}><StatusSlot $w={22}><Icon name="hardware" /></StatusSlot><StatusSlot><Icon name="graphics" /></StatusSlot></StatusGroup>
            <StatusGroup $w={48} $mr={0}><StatusSlot><Icon name="clean" /></StatusSlot><StatusSlot><Icon name="menu" /></StatusSlot></StatusGroup>
        </StatusTools>
    </StatusBar>
);

const WindowsTaskbar = () => (
    <Taskbar>
        <Streaks width="1920" height="37" viewBox="0 0 1920 37">
            <defs>
                <filter id="soft"><feGaussianBlur stdDeviation="2.500" /></filter>
            </defs>
            <g filter="url(#soft)">
                <path d="M1302 -6Q1345 14 1372 42" stroke="#a9d0f8" strokeWidth="11" fill="none" />
                <path d="M365 0h255l20 37H335z" fill="#5fb4df" opacity=".25" />
                <path d="M830 -2Q750 18 700 40" stroke="#6cbce6" strokeWidth="7" fill="none" opacity=".35" />
                <path d="M0 37L40 0h80L60 37z" fill="#7fb6d8" opacity=".25" />
            </g>
        </Streaks>
        <StartOrb>
            <svg width="38" height="38" viewBox="0 0 38 38">
                <defs>
                    <radialGradient id="orb" cx=".5" cy=".95" r=".9">
                        <stop offset="0" stopColor="#3ff0ff" /><stop offset=".35" stopColor="#117fb5" />
                        <stop offset=".7" stopColor="#164a78" /><stop offset="1" stopColor="#9cb7cb" />
                    </radialGradient>
                </defs>
                <circle cx="19" cy="19" r="17.500" fill="url(#orb)" stroke="#10344f" />
                <path d="M3 16a16 14 0 0 1 32 0c-8 4-20 5-32 0z" fill="#dbe8f0" opacity=".4" />
                <path d="M11 9c3-2 5-2 8 0l-2 9c-3-2-5-2-8 0z" fill="#ef6a32" />
                <path d="M20 10c3 2 6 2 10 0l-2 9c-4 2-7 2-10 0z" fill="#95c93f" />
                <path d="M9 19c3-2 5-2 8 0l-2 9c-3-2-5-2-8 0z" fill="#3f9ee8" />
                <path d="M18 20c3 2 6 2 10 0l-2 9c-4 2-7 2-10 0z" fill="#fccf3b" />
            </svg>
        </StartOrb>
        <TaskButton>
            <svg width="32" height="32" viewBox="0 0 32 32">
                <circle cx="16" cy="16" r="16" fill="#fbc71e" />
                <path d="M2.100 8L9 20a8 8 0 0 0 11 3l-4 9A16 16 0 0 1 2.100 8z" fill="#2f9e4b" />
                <path d="M2.100 8A16 16 0 0 1 29.900 8H16a8 8 0 0 0-7 12z" fill="#e33b2e" />
                <circle cx="16" cy="16" r="8" fill="#fff" />
                <circle cx="16" cy="16" r="6.300" fill="#3274e8" />
            </svg>
        </TaskButton>
        <TaskButton>
            <svg width="32" height="30" viewBox="0 0 32 30">
                <path d="M1 4l2-3h9l2 3h16v24H1z" fill="#eedb8b" stroke="#bda75a" strokeWidth=".7" />
                <path d="M4 2h7v4H4z" fill="#fff" /><path d="M5 2h3v2H5z" fill="#18a34a" />
                <path d="M11 4h8v4h-8z" fill="#fff" /><path d="M13 4h3v2h-3z" fill="#d33" />
                <path d="M19 6h9v4h-9z" fill="#fff" /><path d="M21 6h4v2h-4z" fill="#2e8fe0" />
                <path d="M1 8h18l2 3h10v17H1z" fill="#f9eaa6" />
                <path d="M5 30V20q0-3 3-3h17q3 0 3 3v10h-4v-6q0-2-2-2H11q-2 0-2 2v6z" fill="#8fcdec" stroke="#d6f0fb" />
                <path d="M9 11v14M2 18h14" stroke="#fff" strokeWidth="1.200" opacity=".8" />
            </svg>
        </TaskButton>
        <TaskButton $active><LogoTile><Logo w={24} h={26} /></LogoTile></TaskButton>
        <Tray>
            <TraySlot $w={20}><UpCaret /></TraySlot>
            <TraySlot $w={24}><Icon name="flag" /></TraySlot>
            <TraySlot $w={26}><KeyTile>V</KeyTile></TraySlot>
            <TraySlot $w={23}><Icon name="speaker" /></TraySlot>
            <TraySlot $w={21}><Icon name="network" /></TraySlot>
            <Clock>8:31<br />18.10.2024</Clock>
        </Tray>
        <ShowDesktop />
    </Taskbar>
);

const App = () => (
    <Screen>
        <GlobalStyle />
        <AppWindow>
            <Header>
                <LogoBox><Logo w={25} h={29} /></LogoBox>
                <HeaderRows>
                    <TitleRow>
                        <QuickAccess>
                            <Icon name="newFile" /><Icon name="open" /><Icon name="save" /><Icon name="undo" />
                            <Caret $s={3} /><Icon name="redo" /><Caret $s={3} $c="#999" /><Icon name="more" size={8} box="0 0 8 8" />
                        </QuickAccess>
                        <TitleText>{'Autodesk AutoCAD 2021    Drawing1.dwg'}</TitleText>
                        <Controls $gap={14} $pt={0}><Dash /><MaxBox /><Cross /></Controls>
                    </TitleRow>
                    <MenuRow>
                        {menus.map(([name, w]) => <MenuItem key={name} $w={w}>{name}</MenuItem>)}
                        <Controls $gap={7} $pt={1}>
                            <Dash />
                            <svg width="12" height="11" viewBox="0 0 12 11"><path d="M3 4V1h8.500v5.500H9M.5 5h8v5.500h-8z" stroke={light} fill="none" /><path d="M0 4h9v2H0zM3 0h9v2H3z" fill={light} /></svg>
                            <Cross />
                        </Controls>
                    </MenuRow>
                </HeaderRows>
            </Header>
            <TabRow>
                <FileTab>Drawing1*<Cross s={9} c="#a9adb3" /></FileTab>
                <NewTab><svg width="9" height="9" viewBox="0 0 9 9"><path d="M4.500 0v9M0 4.500h9" stroke="#b0b0b0" strokeWidth="1.800" /></svg></NewTab>
            </TabRow>
            <Toolbars />
            <Body>
                <Main>
                    <Canvas>
                        [−][Top][2D Wireframe]
                        <Ucs width="84" height="78" viewBox="0 0 84 78" stroke="#fff" fill="none">
                            <path d="M10 3l6 6 6-6M16 9v7M8.500 20v50H59M4.500 65.500h9v9h-9zM63 56l13 13M76 56L63 69" />
                        </Ucs>
                        <PlotDialog />
                    </Canvas>
                    <CommandPane>
                        <CommandSide>
                            <Dots $w={17} $h={5} $d={2} />
                            <Cross s={10} />
                            <Icon name="wrench" size={15} />
                        </CommandSide>
                        <CommandText>
                            <History>Command:<br />Command:<br />MPL</History>
                            <Prompt><Icon name="prompt" size={16} h={12} box="0 0 16 12" /><Caret $c="#555" /><em>Type a command</em></Prompt>
                        </CommandText>
                    </CommandPane>
                </Main>
                <Palette>
                    <Dots $w={9} $h={3} />
                    <PaletteName>Properties</PaletteName>
                </Palette>
            </Body>
            <Status />
        </AppWindow>
        <WindowsTaskbar />
    </Screen>
);

export default App;
